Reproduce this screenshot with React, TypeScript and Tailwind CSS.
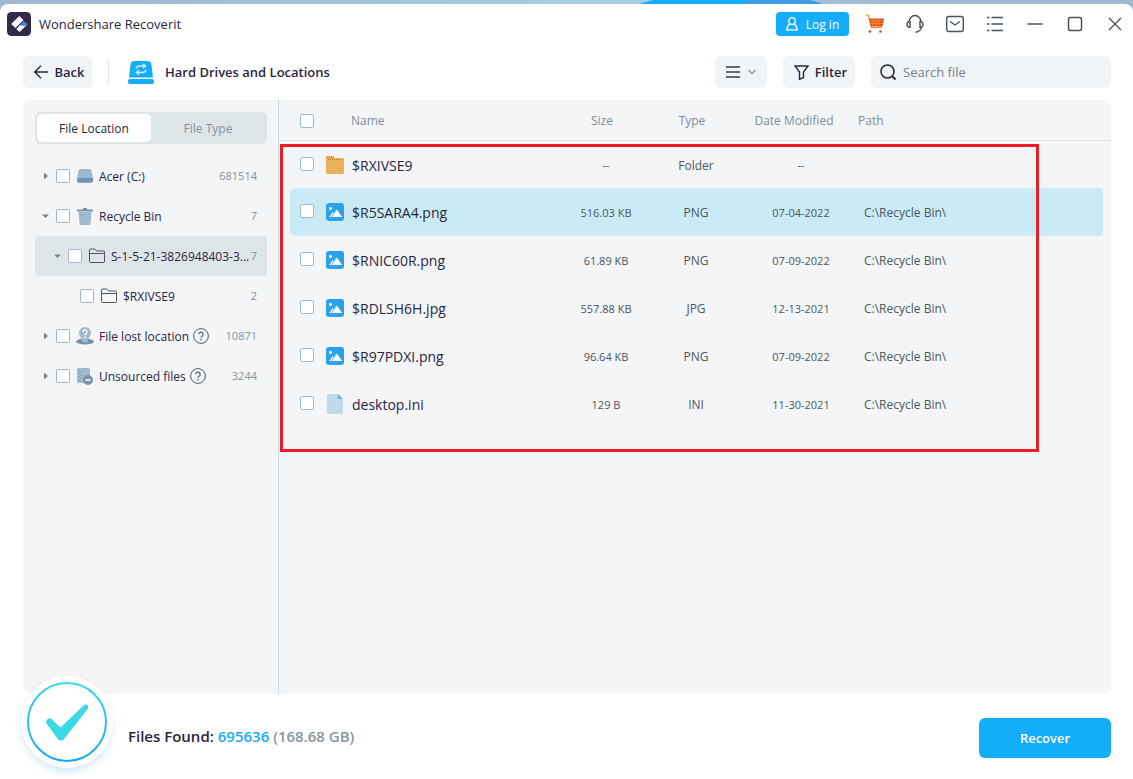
import type { ReactNode } from "react";

function Check({ label }: { label: string }) {
  return (
    <input
      type="checkbox"
      aria-label={label}
      className="block size-[14px] shrink-0 appearance-none rounded-[2px] border border-[#9fb9cf] bg-white checked:bg-[#14adfa]"
    />
  );
}

function DriveIcon() {
  return (
    <svg viewBox="0 0 16 16" className="size-4">
      <path d="M3.500 1h9A2 2 0 0 1 14.400 2.400L16 10H0l1.600-7.600A2 2 0 0 1 3.500 1Z" fill="#9fbad0" />
      <path d="M0 10h16v3a1.800 1.800 0 0 1-1.800 1.800H1.800A1.800 1.800 0 0 1 0 13Z" fill="#6f93b3" />
    </svg>
  );
}

function TrashIcon() {
  return (
    <svg viewBox="0 0 16 17" className="h-[17px] w-4">
      <path d="M6 0h4v1.500h6v2H0v-2h6Z" fill="#7b94a8" />
      <path d="M1.500 4h13l-1 11.500A1.500 1.500 0 0 1 12 17H4a1.500 1.500 0 0 1-1.500-1.500Z" fill="#9fbad0" />
      <path d="M4.500 6v1.500M4.500 9v1.500M7 6v1" stroke="#7b9fbd" />
    </svg>
  );
}

function FolderIcon() {
  return (
    <svg viewBox="0 0 16 16" className="size-4" fill="none" stroke="#4a5560">
      <path d="M.5 13V2a1 1 0 0 1 1-1h4L8 3h6.500a1 1 0 0 1 1 1v9.500a1 1 0 0 1-1 1h-13a1 1 0 0 1-1-1V5.500h15" />
    </svg>
  );
}

function LostIcon() {
  return (
    <svg viewBox="0 0 18 18" className="h-[18px] w-[18px]">
      <ellipse cx="9" cy="14.500" rx="9" ry="3" fill="#7391ac" />
      <path d="M9 0a6 6 0 0 1 6 6c0 3-2.500 4.500-3.500 9.500h-5C5.500 10.500 3 9 3 6a6 6 0 0 1 6-6Z" fill="#9fbad0" />
      <path d="M7 5a2 2 0 1 1 3 1.700c-.7.400-1 .8-1 1.600" fill="none" stroke="#fff" strokeWidth="1.300" />
      <circle cx="9" cy="10.300" r=".9" fill="#fff" />
    </svg>
  );
}

function UnsourcedIcon() {
  return (
    <svg viewBox="0 0 16 17" className="h-[17px] w-4">
      <rect x="0" y="0" width="13" height="15" rx="1.500" fill="#9fbad0" />
      <path d="M2 2v1M2 5v1M2 8v1M4 3.500v1M4 6.500v1M4 10v1M2 12v1" stroke="#6f93b3" />
      <circle cx="11" cy="12" r="5" fill="#7b94a8" />
      <path d="M8.500 12h5" stroke="#f3f5f7" strokeWidth="1.800" />
    </svg>
  );
}

function HelpIcon() {
  return (
    <svg viewBox="0 0 16 16" className="size-4" fill="none" stroke="#4f5a66">
      <circle cx="8" cy="8" r="7.400" />
      <path d="M5.800 6.300a2.200 2.200 0 1 1 3.300 1.900c-.8.400-1.100.8-1.100 1.600" strokeWidth="1.200" />
      <circle cx="8" cy="11.700" r=".5" fill="#4f5a66" strokeWidth=".6" />
    </svg>
  );
}

type Node = {
  label: string;
  count: string;
  indent: string;
  arrow?: "right" | "down";
  icon: ReactNode;
  help?: boolean;
  selected?: boolean;
};

const tree: Node[] = [
  { label: "Acer (C:)", count: "681514", indent: "pl-[7px]", arrow: "right", icon: <DriveIcon /> },
  { label: "Recycle Bin", count: "7", indent: "pl-[7px]", arrow: "down", icon: <TrashIcon /> },
  { label: "S-1-5-21-3826948403-3...", count: "7", indent: "pl-[19px]", arrow: "down", icon: <FolderIcon />, selected: true },
  { label: "$RXIVSE9", count: "2", indent: "pl-[31px]", icon: <FolderIcon /> },
  { label: "File lost location", count: "10871", indent: "pl-[7px]", arrow: "right", icon: <LostIcon />, help: true },
  { label: "Unsourced files", count: "3244", indent: "pl-[7px]", arrow: "right", icon: <UnsourcedIcon />, help: true },
];

function TreeRow({ node }: { node: Node }) {
  return (
    <li className={`flex h-10 items-center rounded-[4px] pr-[10px] ${node.indent} ${node.selected ? "bg-[#dee5e9]" : ""}`}>
      <span className="flex w-[14px] shrink-0 items-center">
        {node.arrow && (
          <button aria-label={`Toggle ${node.label}`} className="block">
            <svg viewBox="0 0 8 8" className="size-2" fill="#7d868e">
              {node.arrow === "right" ? <path d="M2 .5 6 4 2 7.500Z" /> : <path d="M0 2.500h7L3.500 6Z" />}
            </svg>
          </button>
        )}
      </span>
      <Check label={node.label} />
      <span className="ml-[6px] flex w-[18px] shrink-0 justify-center">{node.icon}</span>
      <span className="ml-[5px] pt-[2px] text-xs whitespace-nowrap text-[#2a2640]">{node.label}</span>
      {node.help && (
        <button aria-label={`About ${node.label}`} className="ml-1 block">
          <HelpIcon />
        </button>
      )}
      <span className="ml-auto text-[11px] text-[#84929e]">{node.count}</span>
    </li>
  );
}

function FileIcon({ kind }: { kind: "folder" | "image" | "file" }) {
  if (kind === "folder")
    return (
      <svg viewBox="0 0 18 18" className="size-[18px] shrink-0">
        <path d="M0 0h7l1.500 2H17a1 1 0 0 1 1 1v13.500a1.500 1.500 0 0 1-1.500 1.500h-15A1.500 1.500 0 0 1 0 16.500Z" fill="#ebb05a" />
        <path d="M1 1.500h7M2 3.500h14" stroke="#b9762c" strokeDasharray="1 1" />
      </svg>
    );
  if (kind === "image")
    return (
      <svg viewBox="0 0 18 18" className="size-[18px] shrink-0">
        <rect width="18" height="18" rx="3" fill="#2ba3ec" />
        <circle cx="4.500" cy="5.500" r="1.400" fill="#fff" />
        <path d="m6 14 4.700-7.500L16.200 14Z" fill="#fff" />
        <path d="M3.200 14 6.700 9l1 1L5 14Z" fill="#fff" />
      </svg>
    );
  return (
    <svg viewBox="0 0 18 20" className="h-5 w-[18px] shrink-0">
      <path d="M2.500 0H12l5 5v13.500a1.500 1.500 0 0 1-1.500 1.500h-13A1.500 1.500 0 0 1 1 18.500v-17A1.500 1.500 0 0 1 2.500 0Z" fill="#c0d8e7" />
      <path d="M12 0v4a1 1 0 0 0 1 1h4Z" fill="#7fa5c0" />
    </svg>
  );
}

type FileRow = {
  name: string;
  size: string;
  type: string;
  date: string;
  path: string;
  kind: "folder" | "image" | "file";
  selected?: boolean;
};

const files: FileRow[] = [
  { name: "$RXIVSE9", size: "--", type: "Folder", date: "--", path: "", kind: "folder" },
  { name: "$R5SARA4.png", size: "516.03 KB", type: "PNG", date: "07-04-2022", path: "C:\\Recycle Bin\\", kind: "image", selected: true },
  { name: "$RNIC60R.png", size: "61.89 KB", type: "PNG", date: "07-09-2022", path: "C:\\Recycle Bin\\", kind: "image" },
  { name: "$RDLSH6H.jpg", size: "557.88 KB", type: "JPG", date: "12-13-2021", path: "C:\\Recycle Bin\\", kind: "image" },
  { name: "$R97PDXI.png", size: "96.64 KB", type: "PNG", date: "07-09-2022", path: "C:\\Recycle Bin\\", kind: "image" },
  { name: "desktop.ini", size: "129 B", type: "INI", date: "11-30-2021", path: "C:\\Recycle Bin\\", kind: "file" },
];

function FileTable() {
  return (
    <table className="w-full table-fixed border-separate border-spacing-0 text-xs text-[#4b5763]">
      <colgroup>
        <col className="w-[11px]" />
        <col className="w-[35px]" />
        <col className="w-[236px]" />
        <col className="w-[90px]" />
        <col className="w-[90px]" />
        <col className="w-[117px]" />
        <col />
        <col className="w-2" />
      </colgroup>
      <thead>
        <tr className="h-[41px] text-[#7f8c98] *:border-b *:border-[#dfe4e8] *:p-0 *:font-normal">
          <td />
          <th>
            <div className="pt-[2px] pl-[10px]">
              <Check label="Select all files" />
            </div>
          </th>
          <th className="text-left">
            <div className="pt-[2px] pl-[26px]">Name</div>
          </th>
          <th>
            <div className="pt-[2px] pr-2">Size</div>
          </th>
          <th>
            <div className="pt-[2px] pr-2">Type</div>
          </th>
          <th>
            <div className="pt-[2px] pr-[11px]">Date Modified</div>
          </th>
          <th className="text-left">
            <div className="pt-[2px]">Path</div>
          </th>
          <td />
        </tr>
      </thead>
      <tbody>
        {files.map((f) => (
          <tr
            key={f.name}
            className={`h-12 first:h-[47px] *:p-0 ${f.selected ? "[&>*:not(:first-child):not(:last-child)]:bg-[#caebf6]" : ""}`}
          >
            <td />
            <td className="rounded-l-[6px]">
              <div className="pb-[2px] pl-[10px]">
                <Check label={f.name} />
              </div>
            </td>
            <td>
              <div className="flex items-center gap-2 pl-px text-sm text-[#2a2640]">
                <FileIcon kind={f.kind} />
                <span className="pt-[2px]">{f.name}</span>
              </div>
            </td>
            <td className="text-center text-[11px]">
              <div className="pt-[2px]">{f.size}</div>
            </td>
            <td className="text-center">
              <div className="pt-[2px]">{f.type}</div>
            </td>
            <td className="text-center text-[11px]">
              <div className="pt-[2px] pl-[3px]">{f.date}</div>
            </td>
            <td className="rounded-r-[4px]">
              <div className="pt-[2px] pl-[6px]">{f.path}</div>
            </td>
            <td />
          </tr>
        ))}
      </tbody>
    </table>
  );
}

function TitleBar() {
  return (
    <header className="flex h-10 items-center pr-[9px] pl-[7px]">
      <svg viewBox="0 0 24 24" className="size-6">
        <rect width="24" height="24" rx="4.500" fill="#34284a" />
        <path d="M12.300 4 16.500 8 8.500 16 4.200 12Z" fill="#fff" />
        <path d="m16 9.500 4.300 3-7.800 7.500L9.300 17Z" fill="#fff" />
        <path d="m16 9 4.500 3.300-1.500 1.700-5.500-.5-.5-1.500Z" fill="#3d86d6" />
        <path d="m9 16.500 7-7" stroke="#34284a" strokeWidth=".8" />
      </svg>
      <h1 className="ml-2 pt-[2px] text-[13px] text-[#2a2640]">Wondershare Recoverit</h1>
      <div className="ml-auto flex items-center">
        <button className="mr-4 flex h-6 w-[73px] items-center justify-center gap-2 rounded-[4px] bg-[#14adfa] text-xs text-white">
          <svg viewBox="0 0 12 14" className="h-[14px] w-3" fill="none" stroke="#fff" strokeWidth="1.300">
            <circle cx="6" cy="4" r="3.300" />
            <path d="M4 6.800C2 8 1 9.500.8 12.800h10.400C11 9.500 10 8 8 6.800" />
          </svg>
          <span className="pt-[2px]">Log in</span>
        </button>
        <div className="flex items-center gap-5 text-[#46545f]">
          <button aria-label="Shop">
            <svg viewBox="0 0 20 20" className="size-5">
              <path d="M1 1.500h2.500L6.500 13.500H17" fill="none" stroke="#e8a04a" strokeWidth="1.500" />
              <path d="M4 4.500h15L17.500 12.500H6Z" fill="#e2511f" />
              <path d="M5 7h13.500M5.500 9.500h12.500M8 5v7M11 5v7M14 5v7" stroke="#ef9a45" strokeWidth=".7" />
              <circle cx="5" cy="17.500" r="1.300" fill="#e2421f" />
              <circle cx="15.500" cy="17.500" r="1.300" fill="#e2421f" />
            </svg>
          </button>
          <button aria-label="Support">
            <svg viewBox="0 0 20 20" className="size-5" fill="none" stroke="currentColor" strokeWidth="1.500">
              <path d="M4 8a6 6.500 0 0 1 12 0" />
              <path d="M5 7.500v5.800C3 13.500 2 12 2 10.400S3 7.500 5 7.500ZM15 7.500v5.800c2 .2 3-1.300 3-2.900s-1-2.900-3-2.900Z" />
              <path d="M16.500 13c-.5 3-2.500 4.800-6 5.200" />
            </svg>
          </button>
          <button aria-label="Messages">
            <svg viewBox="0 0 20 20" className="size-5" fill="none" stroke="currentColor" strokeWidth="1.400">
              <rect x="1.700" y="2.500" width="16.600" height="15" rx="2" />
              <path d="m5 7.500 5 3.500 5-3.500" />
            </svg>
          </button>
          <button aria-label="Menu">
            <svg viewBox="0 0 20 20" className="size-5" fill="none" stroke="currentColor" strokeWidth="1.400">
              <path d="M2 3.500h2.500M6.500 3.500H18M2 10h2.500M6.500 10H18M2 16.500h2.500M6.500 16.500H18" />
            </svg>
          </button>
          <button aria-label="Minimize">
            <svg viewBox="0 0 20 20" className="size-5" stroke="currentColor" strokeWidth="1.500">
              <path d="M2.500 10h15" />
            </svg>
          </button>
          <button aria-label="Maximize">
            <svg viewBox="0 0 20 20" className="size-5" fill="none" stroke="currentColor" strokeWidth="1.500">
              <rect x="3.500" y="3.500" width="13" height="13" rx="2" />
            </svg>
          </button>
          <button aria-label="Close" className="-mr-px">
            <svg viewBox="0 0 20 20" className="size-5" stroke="currentColor" strokeWidth="1.400">
              <path d="m4 4 12 12M16 4 4 16" />
            </svg>
          </button>
        </div>
      </div>
    </header>
  );
}

function Toolbar() {
  return (
    <div className="mt-3 flex h-8 items-center pr-[22px] pl-[23px] text-[#2a2640]">
      <button className="flex h-8 w-[69px] items-center justify-center gap-[6px] rounded-[6px] bg-[#f0f4f6] pl-1 text-[13px] font-semibold">
        <svg viewBox="0 0 14 14" className="size-[14px]" fill="none" stroke="currentColor" strokeWidth="1.400">
          <path d="M14 7H1M7 .8.800 7 7 13.200" />
        </svg>
        <span className="pt-[2px]">Back</span>
      </button>
      <span className="ml-4 h-6 w-px bg-[#dde3e8]" />
      <svg viewBox="0 0 26 23" className="ml-[19px] h-[23px] w-[26px]">
        <path d="M6.500 0h13C22 0 23 1 23.400 3L25 16.500H1L2.600 3C3 1 4 0 6.500 0Z" fill="#14adfa" />
        <rect y="18" width="26" height="5" rx="2" fill="#14adfa" />
        <path d="M8 7.500C8.500 5.500 10 5 12 5h5M15 2.800 17.500 5 15 7.200M18 9c-.5 2-2 2.500-4 2.500H9M11 9.300 8.500 11.500l2.500 2.200" fill="none" stroke="#c9ecfd" strokeWidth="1.600" />
      </svg>
      <h2 className="ml-[11px] pt-[2px] text-[13px] font-semibold">Hard Drives and Locations</h2>
      <div className="ml-auto flex gap-4">
        <button aria-label="View" className="flex h-8 w-[52px] items-center justify-center gap-2 rounded-[6px] bg-[#f0f4f6]">
          <svg viewBox="0 0 14 12" className="h-3 w-[14px]" stroke="#3a3a4e" strokeWidth="1.500">
            <path d="M0 1h14M0 6h14M0 11h14" />
          </svg>
          <svg viewBox="0 0 8 6" className="h-[6px] w-2" fill="none" stroke="#8398a8" strokeWidth="1.500">
            <path d="m.5 1 3.500 3.500L7.500 1" />
          </svg>
        </button>
        <button className="flex h-8 w-[72px] items-center justify-center gap-[6px] rounded-[6px] bg-[#f0f4f6] pl-[3px] text-[13px] font-semibold">
          <svg viewBox="0 0 15 15" className="size-[15px]" fill="none" stroke="currentColor" strokeWidth="1.400">
            <path d="M1 1h13L9.500 7v5.500l-4 1.800V7Z" />
          </svg>
          <span className="pt-[2px]">Filter</span>
        </button>
        <label className="flex h-8 w-60 items-center gap-[7px] rounded-[6px] bg-[#f0f4f6] pl-[9px]">
          <svg viewBox="0 0 16 16" className="size-4 shrink-0" fill="none" stroke="currentColor" strokeWidth="1.500">
            <circle cx="7.500" cy="7.500" r="6.500" />
            <path d="m12.500 12.500 3 3" strokeWidth="2" />
          </svg>
          <input
            type="search"
            aria-label="Search file"
            placeholder="Search file"
            className="min-w-0 flex-1 bg-transparent pt-[2px] text-[13px] outline-none placeholder:text-[#76818b]"
          />
        </label>
      </div>
    </div>
  );
}

function Footer() {
  return (
    <footer className="relative flex h-[85px] items-center justify-between pr-[22px] pb-px pl-32">
      <div className="absolute -top-[18px] left-[21px] rounded-full bg-white p-[6px] shadow-[0_5px_8px_-2px_rgba(120,190,215,0.4)]">
        <svg viewBox="0 0 80 80" className="size-20">
          <defs>
            <linearGradient id="ring" x1="0" y1="0" x2="0" y2="1">
              <stop offset="0" stopColor="#3bd8e6" />
              <stop offset="1" stopColor="#14a6fa" />
            </linearGradient>
          </defs>
          <circle cx="40" cy="40" r="39" fill="#fff" stroke="url(#ring)" strokeWidth="2" />
          <path d="M19.500 38.500c1.500-2.500 4.500-2.500 6-.5l8 7.500L56.500 23.500c3-2.500 6 .5 4.200 3.500L37 57c-2 2.300-5 2-6.500-.5L19.800 42c-.9-1.200-1-2.300-.3-3.500Z" fill="#3bd8e6" />
        </svg>
      </div>
      <p className="text-[15px] font-semibold text-[#2a2640]">
        Files Found: <span className="text-[#14adfa]">695636</span> <span className="text-[#8795a1]">(168.68 GB)</span>
      </p>
      <button className="mt-1 h-10 w-33 rounded-[6px] bg-[#14adfa] pt-[2px] text-[13px] font-semibold text-white">Recover</button>
    </footer>
  );
}

export default function App() {
  return (
    <div className="flex min-h-screen flex-col bg-[#9fbad0] bg-linear-to-r from-[#9fbad0] from-10% via-[#a6cfe6] via-55% to-[#9fbad0] to-80% pt-1 font-['Open_Sans','Noto_Sans',sans-serif]">
      <svg viewBox="0 0 1133 4" preserveAspectRatio="none" className="-mt-1 h-1 w-full" aria-hidden="true">
        <path d="M640 4c4-2 8-3 14-4h154c6 1 10 2 14 4Z" fill="#14adfa" />
        <path d="M742 4 750 0h58c6 1 10 2 14 4Z" fill="#3f9be2" />
      </svg>
      <div className="flex flex-1 flex-col rounded-t-[8px] bg-white">
        <TitleBar />
        <Toolbar />
        <main className="mt-3 mr-[22px] ml-[23px] flex flex-1 rounded-[8px] bg-[#f3f5f7]">
          <aside className="w-64 shrink-0 border-r border-dotted border-[#9cc6e0] p-3 pr-[11px]">
            <div className="flex h-8 rounded-[6px] bg-[#dee5e9] p-[2px] text-xs font-medium">
              <button className="flex-1 rounded-[5px] bg-white pt-[2px] text-[#2a2640]">File Location</button>
              <button className="flex-1 pt-[2px] text-[#84929e]">File Type</button>
            </div>
            <ul className="mt-3">
              {tree.map((n) => (
                <TreeRow key={n.label} node={n} />
              ))}
            </ul>
          </aside>
          <section className="relative min-w-0 flex-1">
            <FileTable />
            <div className="pointer-events-none absolute top-11 right-[72px] left-[1px] h-[308px] border-3 border-[#ee1c25]" />
          </section>
        </main>
        <Footer />
      </div>
    </div>
  );
}
